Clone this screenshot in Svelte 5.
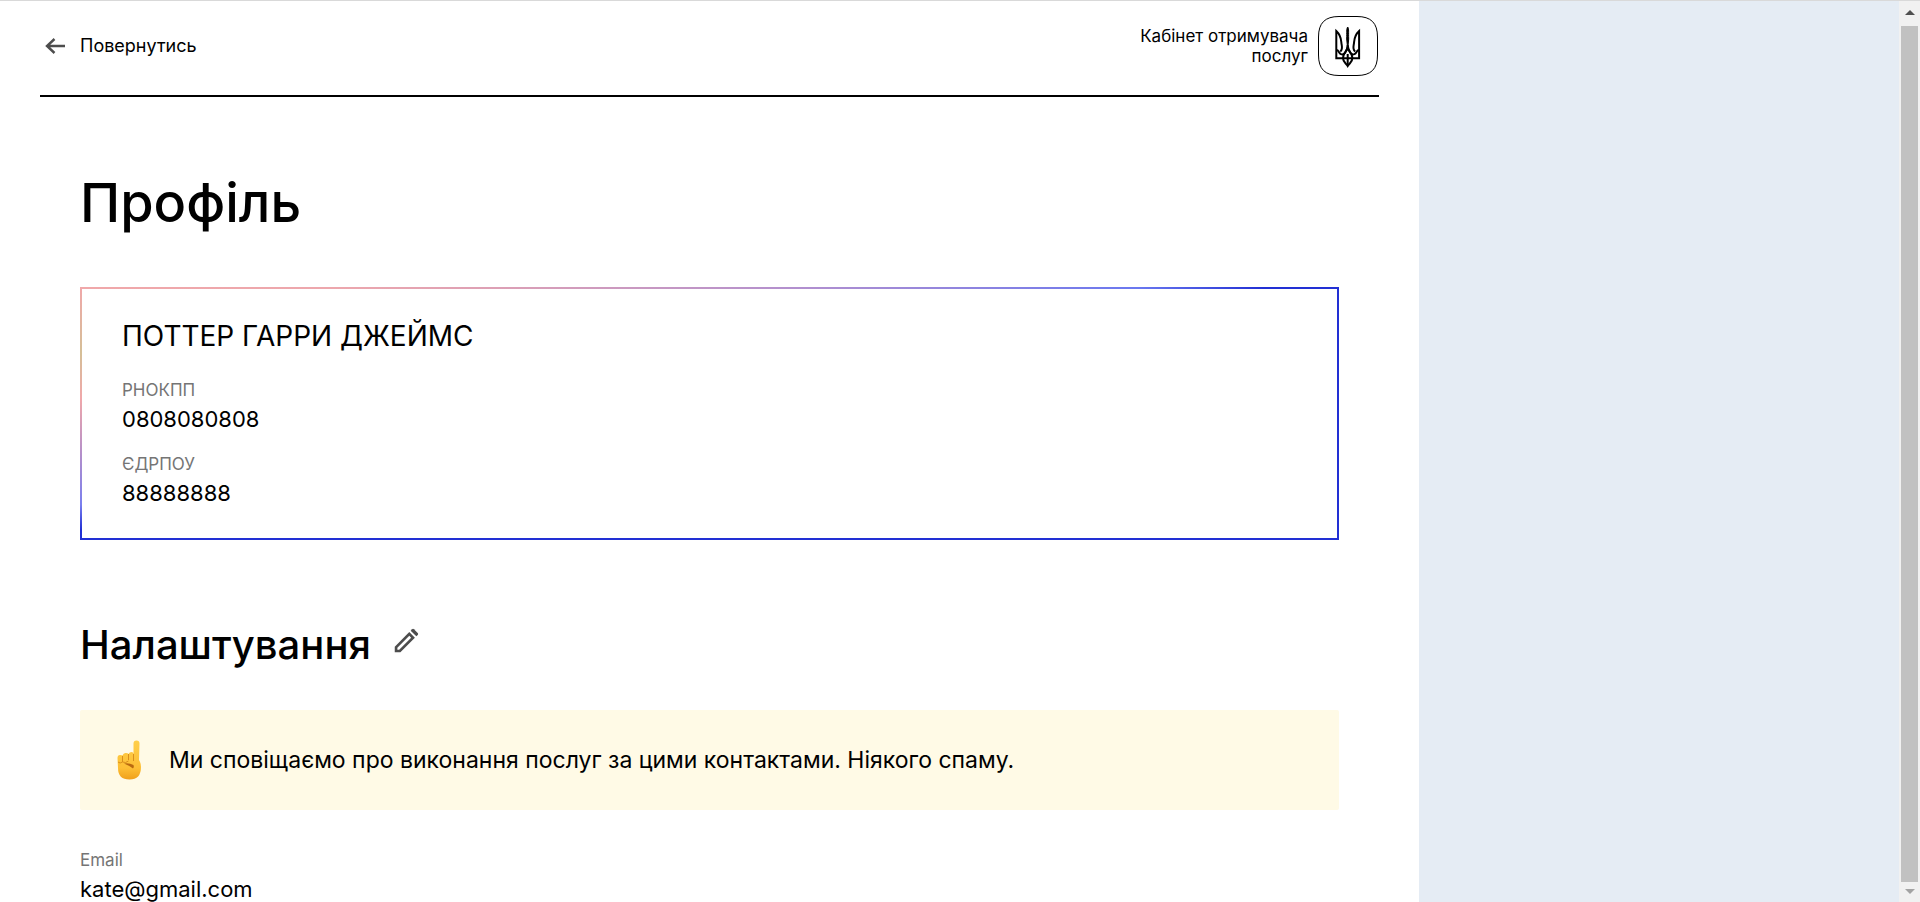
<script lang="ts">
	type Field = { label: string; value: string };

	const fullName = 'ПОТТЕР ГАРРИ ДЖЕЙМС';

	const codes: Field[] = [
		{ label: 'РНОКПП', value: '0808080808' },
		{ label: 'ЄДРПОУ', value: '88888888' }
	];

	const contacts: Field[] = [{ label: 'Email', value: 'kate@gmail.com' }];
</script>

<div class="layout">
	<div class="page">
		<header>
			<a href="/home" class="back">
				<svg width="24" height="24" viewBox="0 0 24 24" fill="none" stroke="#4d4d4d" stroke-width="2.4">
					<path d="M23 12H5M12.5 5L5 12L12.5 19" />
				</svg>
				Повернутись
			</a>
			<div class="brand">
				<span>Кабінет отримувача послуг</span>
				<svg width="60" height="60" viewBox="0 0 60 60" fill="none" stroke="#000">
					<path d="M21 .5H39C53 .5 59.5 7 59.5 21V39C59.5 53 53 59.5 39 59.5H21C7 59.5 .5 53 .5 39V21C.5 7 7 .5 21 .5Z" />
					<g stroke-width="2">
						<path d="M29.7 42.3H18.3V15C21.5 18 23 22 23.3 26C23.5 30 25.5 33 22.3 35.5" />
						<path d="M29.7 42.3H41.1V15C37.9 18 36.4 22 36.1 26C35.9 30 33.9 33 37.1 35.5" />
						<path d="M18.3 34C21 34 20.5 37 23 38.2C26 39.5 29 36 29.7 29C30.4 36 33.4 39.5 36.4 38.2C38.9 37 38.4 34 41.1 34" />
						<path d="M29.7 32C28 36 25 37.5 25 42C25 46.500 28 47 29.7 50C31.4 47 34.400 46.500 34.400 42C34.400 37.5 31.4 36 29.7 32Z" />
						<path d="M29.7 38V49" />
					</g>
					<path d="M29.7 11C28.3 13 29 16 28.700 23L29.7 33L30.700 23C30.4 16 31.1 13 29.7 11Z" fill="#000" />
				</svg>
			</div>
		</header>

		<main>
			<h1>Профіль</h1>

			<section class="card">
				<h3>{fullName}</h3>
				<dl>
					{#each codes as { label, value }}
						<div class="field">
							<dt>{label}</dt>
							<dd>{value}</dd>
						</div>
					{/each}
				</dl>
			</section>

			<div class="heading">
				<h2>Налаштування</h2>
				<button type="button" aria-label="Редагувати">
					<svg width="30" height="30" viewBox="0 0 32 32" fill="#4d4d4d">
						<path d="M4 28V22L19.5 6.5L25.5 12.5L10 28Z M6.800 23.300V25.200H8.700L21.500 12.500L19.5 10.5Z" fill-rule="evenodd" />
						<path d="M21 5L22.500 3.500Q23.500 2.500 24.500 3.500L28.500 7.500Q29.500 8.500 28.500 9.500L27 11Z" />
					</svg>
				</button>
			</div>

			<div class="notice">
				<svg width="24" height="40" viewBox="0 0 24 40">
					<defs>
						<linearGradient id="skin" x1="0" y1="0" x2="0" y2="1">
							<stop offset="0" stop-color="#ffcf4a" />
							<stop offset="0.7" stop-color="#fdbf35" />
							<stop offset="1" stop-color="#f0a01c" />
						</linearGradient>
					</defs>
					<path d="M16.5 3.5Q16.5 .5 19.5 .5Q22.5 .5 22.5 3.5L22 20Q24 23 24 27Q24 39.5 12.5 39.5Q1 39.5 1 28L.5 18Q.5 15 3 15Q5 15 5.5 15.5Q6.5 12.500 9 13Q11 13 11.5 14Q12.5 12 14.5 12Q16.5 12 16.5 14Z" fill="url(#skin)" />
					<path d="M5.500 16V22M11.500 14V20M16.500 14V21M1 22Q3 24 5.500 22Q8.500 23.500 11.500 21" fill="none" stroke="#d98f1c" />
					<path d="M7 23.500Q12 22.500 16.500 25Q17.500 27 16 28.500Q12 25.500 7 23.500Z" fill="#b96a10" />
				</svg>
				<p>Ми сповіщаємо про виконання послуг за цими контактами. Ніякого спаму.</p>
			</div>

			<dl>
				{#each contacts as { label, value }}
					<div class="field">
						<dt>{label}</dt>
						<dd>{value}</dd>
					</div>
				{/each}
			</dl>
		</main>
	</div>

	<aside class="side"></aside>

	<div class="scroll">
		<svg width="10" height="6" viewBox="0 0 10 6"><path d="M0 5L5 0L10 5Z" fill="#505050" /></svg>
		<div class="thumb"></div>
		<svg width="10" height="6" viewBox="0 0 10 6"><path d="M0 0H10L5 5Z" fill="#a3a3a3" /></svg>
	</div>
</div>

<style>
	:global(body) {
		background: #fff;
	}
	.layout {
		display: flex;
		height: 100vh;
		box-sizing: border-box;
		overflow: hidden;
		border-top: 1px solid #d9d9d9;
		font-family: Inter, 'Noto Sans', sans-serif;
		color: #000;
	}
	.page {
		flex: 1;
		min-width: 0;
		padding: 0 40px;
	}
	.side {
		width: 25vw;
		background: #e5ecf4;
	}
	header {
		display: flex;
		justify-content: space-between;
		align-items: center;
		padding: 15px 1px 19px;
		border-bottom: 2px solid #000;
	}
	.back {
		display: flex;
		align-items: center;
		gap: 14px;
		padding-left: 1px;
		font-size: 18px;
		line-height: 20px;
		color: #000;
		text-decoration: none;
	}
	.brand {
		display: flex;
		align-items: center;
		gap: 10px;
	}
	.brand span {
		width: 180px;
		font-size: 17px;
		line-height: 20px;
		text-align: right;
	}
	main {
		padding: 72px 40px 0;
	}
	h1,
	h2,
	h3,
	p,
	dl,
	dd {
		margin: 0;
		font-weight: 400;
	}
	h1 {
		margin-bottom: 50px;
		font-size: 54px;
		line-height: 68px;
		font-weight: 500;
	}
	.card {
		padding: 33px 42px 31px;
		background:
			linear-gradient(#2230d4, #2230d4) right / 2px 100% no-repeat,
			linear-gradient(#2230d4, #2230d4) bottom / 100% 2px no-repeat,
			linear-gradient(to right, #f0a8aa 0%, #eda7ad 20%, #dda0b5 33%, #b08fd0 58%, #6a78f0 84%, #2230d4 94%) top / 100% 2px no-repeat,
			linear-gradient(#f0a8aa 0%, #d5bf97 26%, #f0a8aa 44%, #b48fca 66%, #7a7fee 86%, #2230d4 96%) left / 2px 100% no-repeat;
	}
	h3 {
		margin-bottom: 26px;
		font-size: 28px;
		line-height: 32px;
	}
	.field + .field {
		margin-top: 17px;
	}
	dt {
		font-size: 17px;
		line-height: 25px;
		color: #757575;
	}
	dd {
		font-size: 22px;
		line-height: 32px;
	}
	.heading {
		display: flex;
		align-items: center;
		gap: 20px;
		margin: 80px 0 40px;
	}
	h2 {
		font-size: 40px;
		line-height: 50px;
		font-weight: 500;
	}
	button {
		display: flex;
		padding: 0 0 8px;
		border: 0;
		background: none;
	}
	.notice {
		display: flex;
		align-items: center;
		gap: 28px;
		margin-bottom: 38px;
		padding: 30px 37px;
		border-radius: 2px;
		background: #fffae6;
	}
	.notice p {
		font-size: 23px;
		line-height: 40px;
	}
	.scroll {
		display: flex;
		flex-direction: column;
		align-items: center;
		gap: 7px;
		width: 21px;
		padding: 9px 0 7px;
		box-sizing: border-box;
		background: #f1f1f1;
	}
	.thumb {
		flex: 1;
		width: 17px;
		margin-top: 3px;
		background: #c1c1c1;
	}
</style>
